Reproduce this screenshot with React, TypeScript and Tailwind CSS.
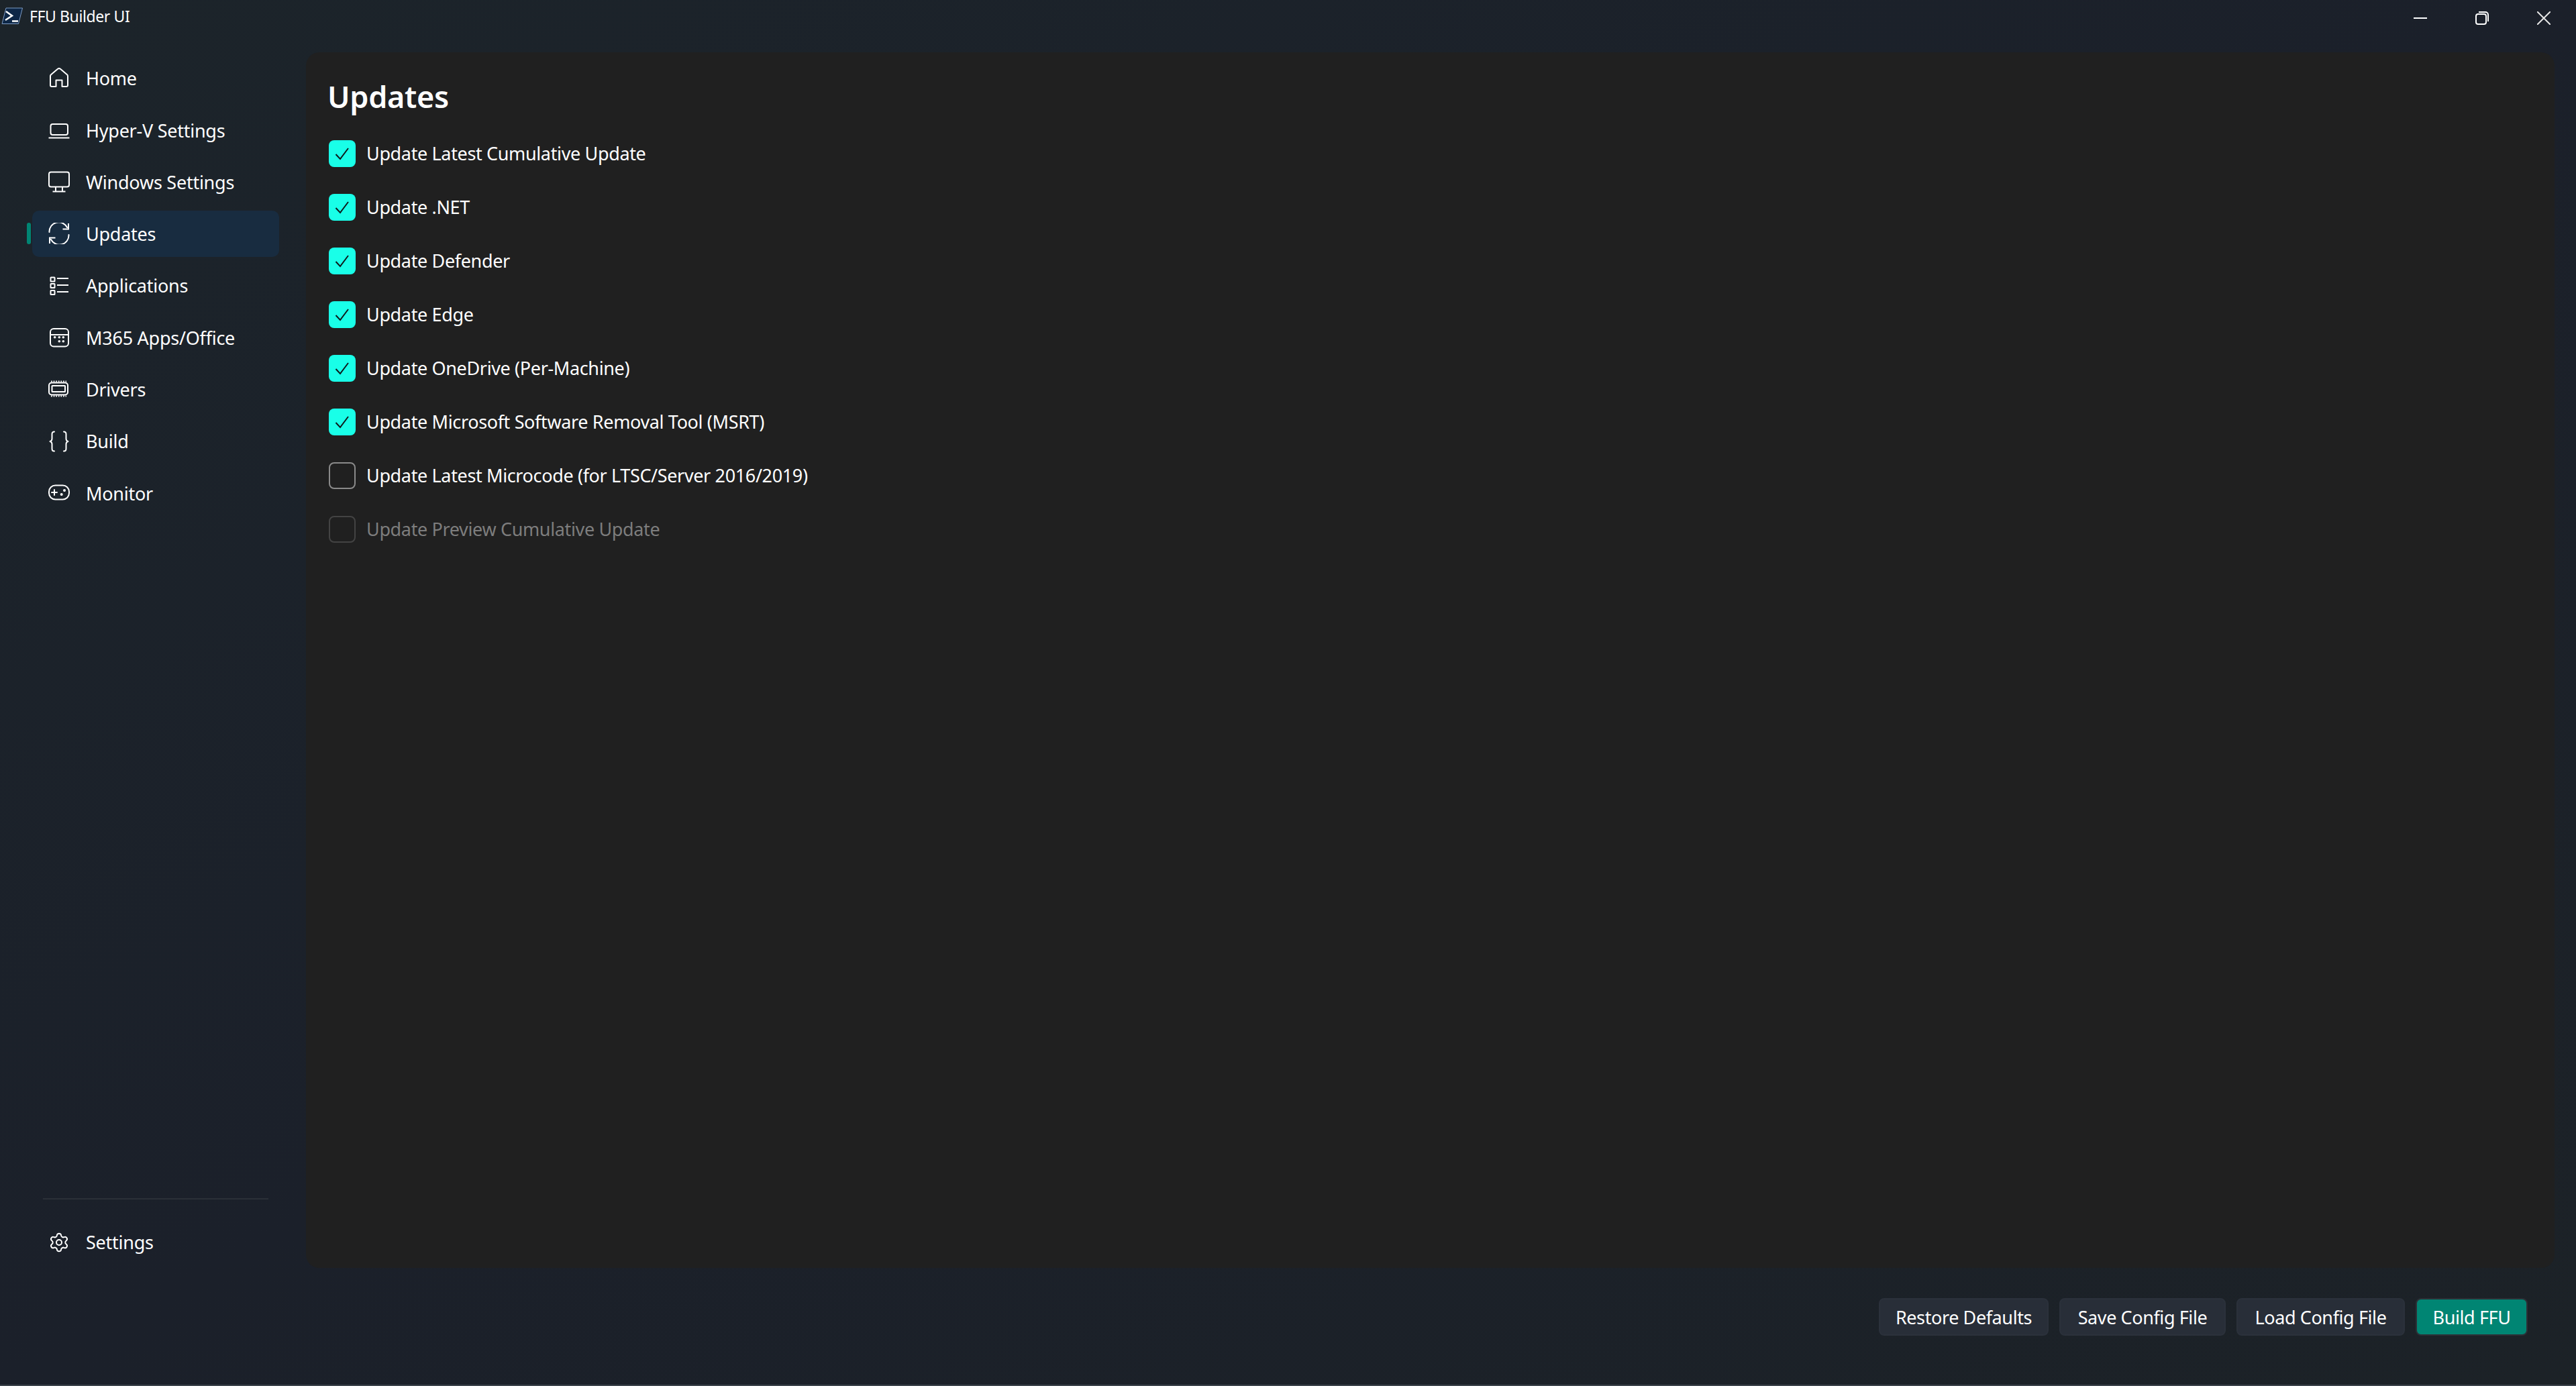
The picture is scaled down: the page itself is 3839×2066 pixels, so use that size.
import React from 'react';
import { Settings } from 'lucide-react';

const FONT = "font-['Noto_Sans','Open_Sans',sans-serif]";

const stroke = { fill: 'none', stroke: 'currentColor', strokeWidth: 2, strokeLinecap: 'round', strokeLinejoin: 'round' } as const;

const Icon: React.FC<{ children: React.ReactNode }> = ({ children }) => (
  <svg width="32" height="32" viewBox="0 0 32 32" className="shrink-0" {...stroke}>
    {children}
  </svg>
);

const navItems: { label: string; icon: React.ReactNode; active?: boolean }[] = [
  {
    label: 'Home',
    icon: (
      <Icon>
        <path d="M14 1.8a3 3 0 0 1 4 0l10 8.4a3 3 0 0 1 1 2.3V26a2 2 0 0 1-2 2h-6.5V18.5h-9V28H5a2 2 0 0 1-2-2V12.5a3 3 0 0 1 1-2.3z" />
      </Icon>
    ),
  },
  {
    label: 'Hyper-V Settings',
    icon: (
      <Icon>
        <rect x="3.5" y="7" width="25.5" height="16" rx="3" />
        <path d="M0.5 27.5H31.5" strokeLinecap="butt" />
      </Icon>
    ),
  },
  {
    label: 'Windows Settings',
    icon: (
      <Icon>
        <rect x="1" y="1.5" width="30" height="22" rx="3" />
        <path d="M11 24v6M21 24v6M6.5 30.5h19" strokeLinecap="butt" />
      </Icon>
    ),
  },
  {
    label: 'Updates',
    active: true,
    icon: (
      <Icon>
        <path d="M1.5 14A14 14 0 0 1 28 7" />
        <path d="M30 1v8.5h-8.5" strokeLinecap="butt" strokeLinejoin="miter" />
        <path d="M30.5 18A14 14 0 0 1 4 25" />
        <path d="M2 31v-8.5h8.5" strokeLinecap="butt" strokeLinejoin="miter" />
      </Icon>
    ),
  },
  {
    label: 'Applications',
    icon: (
      <Icon>
        <rect x="3.5" y="3.5" width="6" height="6" rx="0.5" />
        <rect x="3.5" y="13" width="6" height="6" rx="0.5" />
        <rect x="3.5" y="23" width="6" height="6" rx="0.5" />
        <path d="M13 5h17M13 15h17M13 25h17" strokeLinecap="butt" />
      </Icon>
    ),
  },
  {
    label: 'M365 Apps/Office',
    icon: (
      <Icon>
        <rect x="3" y="3" width="27" height="26.5" rx="5" />
        <path d="M3 12h27" />
        <g fill="currentColor" stroke="none">
          <circle cx="9.7" cy="15.7" r="1.8" />
          <circle cx="16.3" cy="15.7" r="1.8" />
          <circle cx="22.3" cy="15.7" r="1.8" />
          <circle cx="16.3" cy="21.7" r="1.8" />
          <circle cx="22.3" cy="21.7" r="1.8" />
        </g>
      </Icon>
    ),
  },
  {
    label: 'Drivers',
    icon: (
      <Icon>
        <rect x="1" y="6.5" width="28" height="18" rx="4" />
        <rect x="5.5" y="11" width="19.5" height="9" rx="0.5" />
        <path d="M4 4.5H27M4 26.5H27" strokeLinecap="butt" strokeDasharray="1.8 1.8" />
      </Icon>
    ),
  },
  {
    label: 'Build',
    icon: (
      <Icon>
        <path d="M9 1.5C6 1.5 5.5 3 5.5 5v7c0 2-1 3.5-3 4 2 .5 3 2 3 4v7c0 2 .5 3.5 3.5 3.5" />
        <path d="M23 1.5c3 0 3.5 1.5 3.5 3.5v7c0 2 1 3.5 3 4-2 .5-3 2-3 4v7c0 2-.5 3.5-3.5 3.5" />
      </Icon>
    ),
  },
  {
    label: 'Monitor',
    icon: (
      <Icon>
        <rect x="1" y="4.5" width="30" height="21" rx="9.5" />
        <path d="M9 11v8M5 15h8" />
        <g fill="currentColor" stroke="none">
          <circle cx="24" cy="12" r="2" />
          <circle cx="19.7" cy="18" r="2" />
        </g>
      </Icon>
    ),
  },
];

const updates: { label: string; checked?: boolean; disabled?: boolean }[] = [
  { label: 'Update Latest Cumulative Update', checked: true },
  { label: 'Update .NET', checked: true },
  { label: 'Update Defender', checked: true },
  { label: 'Update Edge', checked: true },
  { label: 'Update OneDrive (Per-Machine)', checked: true },
  { label: 'Update Microsoft Software Removal Tool (MSRT)', checked: true },
  { label: 'Update Latest Microcode (for LTSC/Server 2016/2019)' },
  { label: 'Update Preview Cumulative Update', disabled: true },
];

const NavRow: React.FC<{ label: string; icon: React.ReactNode; active?: boolean }> = ({ label, icon, active }) => (
  <div className={`relative ml-[48px] flex h-[69px] w-[368px] items-center gap-[24px] rounded-[10px] pl-[24px] text-white ${active ? 'bg-[#182c40]' : ''}`}>
    {active && <div className="absolute left-[-8px] top-[18px] h-[32px] w-[6px] rounded-full bg-[#008573]"></div>}
    {icon}
    <span className="pt-[2px] text-[27px] tracking-[-0.25px]">{label}</span>
  </div>
);

const CheckRow: React.FC<{ label: string; checked?: boolean; disabled?: boolean }> = ({ label, checked, disabled }) => (
  <div className="flex h-[40px] items-center gap-[16px]">
    {checked ? (
      <div className="flex h-[40px] w-[40px] items-center justify-center rounded-[8px] bg-[#19ffe8]">
        <svg width="24" height="24" viewBox="0 0 24 24" fill="none" stroke="#0d1a1a" strokeWidth="2">
          <path d="M2.5 13l6.5 7L21 4" />
        </svg>
      </div>
    ) : (
      <div className={`h-[40px] w-[40px] rounded-[8px] border-2 ${disabled ? 'border-[#434343]' : 'border-[#8a8a8a]'}`}></div>
    )}
    <span className={`text-[27px] tracking-[-0.36px] ${disabled ? 'text-[#7d7d7d]' : 'text-white'}`}>{label}</span>
  </div>
);

const FooterButton: React.FC<{ label: string; width: string; primary?: boolean }> = ({ label, width, primary }) => (
  <button
    className={`flex h-[56px] items-center justify-center rounded-[8px] border-2 pt-[2px] text-[27px] tracking-[-0.4px] text-white ${width} ${
      primary ? 'border-[#2c3036] bg-[#008573]' : 'border-[#2b313b] bg-[#282e38]'
    }`}
  >
    {label}
  </button>
);

export default function App() {
  return (
    <div className={`flex h-screen w-screen flex-col overflow-hidden border-b-2 border-[#3c434b] bg-linear-to-br from-[#1c242a] via-[#1b202a] to-[#1c2227] ${FONT}`}>
      {/* Title bar */}
      <div className="flex h-[78px] shrink-0 items-start justify-between">
        <div className="flex items-center gap-[10px] pl-[2px] pt-[8px]">
          <svg width="32" height="26" viewBox="0 0 32 26">
            <path d="M7 1H31.5L25.5 24.5H1z" fill="#0d2747" stroke="#7f9cc4" strokeWidth="1" />
            <path d="M7 6l9 6.5-10 6.5" fill="none" stroke="#fff" strokeWidth="2.5" />
            <path d="M16 20.5h9" stroke="#fff" strokeWidth="2.5" />
          </svg>
          <span className="text-[23px] leading-[32px] tracking-[-0.4px] text-white">FFU Builder UI</span>
        </div>
        <div className="flex pr-[2px] text-white">
          <div className="flex h-[54px] w-[92px] items-center justify-center">
            <svg width="20" height="20" viewBox="0 0 20 20" stroke="currentColor" strokeWidth="2">
              <path d="M0 10h20" />
            </svg>
          </div>
          <div className="flex h-[54px] w-[92px] items-center justify-center">
            <svg width="20" height="20" viewBox="0 0 20 20" fill="none" stroke="currentColor" strokeWidth="2">
              <rect x="1" y="4" width="15" height="15" rx="3" />
              <path d="M5 1h10a4 4 0 0 1 4 4v10" />
            </svg>
          </div>
          <div className="flex h-[54px] w-[92px] items-center justify-center">
            <svg width="20" height="20" viewBox="0 0 20 20" stroke="#e5e5e5" strokeWidth="2">
              <path d="M0 0l20 20M20 0L0 20" />
            </svg>
          </div>
        </div>
      </div>

      <div className="flex min-h-0 flex-1">
        {/* Sidebar */}
        <div className="flex w-[456px] shrink-0 flex-col pt-[4px]">
          <div className="flex flex-1 flex-col gap-[8.3px]">
            {navItems.map((item) => (
              <NavRow key={item.label} {...item} />
            ))}
          </div>
          <div className="ml-[64px] h-[2px] w-[336px] bg-[#2b3038]"></div>
          <div className="mb-[178px] mt-[29px]">
            <NavRow label="Settings" icon={<Settings size={32} strokeWidth={1.5} className="shrink-0" />} />
          </div>
        </div>

        {/* Content */}
        <div className="flex min-w-0 flex-1 flex-col">
          <div className="mr-[32px] flex-1 rounded-[20px] bg-[#202020] pl-[32px] pt-[31px]">
            <h1 className="text-[45px] font-semibold leading-[70px] tracking-[-0.3px] text-white">Updates</h1>
            <div className="ml-[2px] mt-[30px] flex flex-col gap-[40px]">
              {updates.map((u) => (
                <CheckRow key={u.label} {...u} />
              ))}
            </div>
          </div>
          <div className="flex h-[174px] shrink-0 items-start justify-end gap-[16px] pr-[72px] pt-[45px]">
            <FooterButton label="Restore Defaults" width="w-[253px]" />
            <FooterButton label="Save Config File" width="w-[248px]" />
            <FooterButton label="Load Config File" width="w-[251px]" />
            <FooterButton label="Build FFU" width="w-[167px]" primary />
          </div>
        </div>
      </div>
    </div>
  );
}
